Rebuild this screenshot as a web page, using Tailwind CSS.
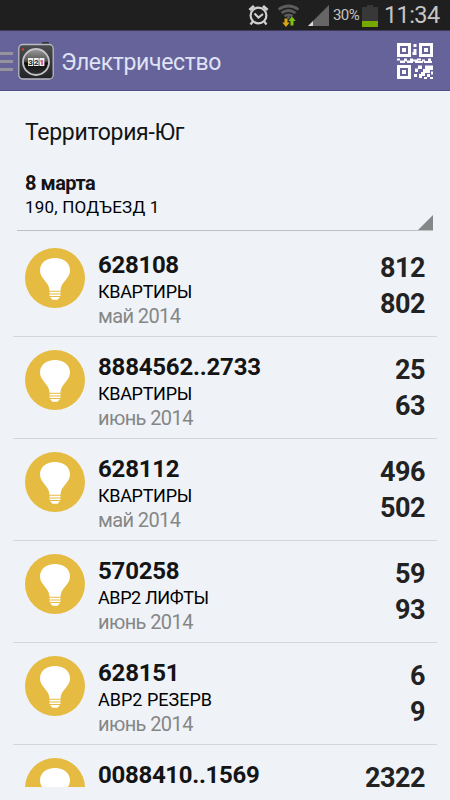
<!DOCTYPE html>
<html lang="ru">
<head>
    <meta charset="UTF-8">
    <meta name="viewport" content="width=device-width, initial-scale=1.0">
    <title>Электричество</title>
    <script src="https://cdn.jsdelivr.net/npm/@tailwindcss/browser@4"></script>
</head>
<body class="w-[450px] h-[800px] overflow-hidden bg-[#eff3f8] font-['Roboto',sans-serif] text-[#141414]">

    <!-- Иконки -->
    <svg class="hidden">
        <symbol id="bulb" viewBox="0 0 60 60">
            <circle cx="30" cy="30" r="30" fill="#e5bb42"/>
            <path fill="#fff" d="M30 10c-9 0-15 5-15 12.500 0 8.500 9.500 11.500 9.500 20.300h11c0-8.800 9.500-11.800 9.500-20.300C45 15 39 10 30 10z"/>
            <path fill="#fff" d="M24.500 43.800h11v1.600h-11zM24.500 46.400h11v1.600h-11zM25 49h10l-1.500 1.700h-7zM27 50.500h6v1.200h-6z"/>
        </symbol>
    </svg>

    <!-- Строка состояния -->
    <div class="h-[30px] bg-[#1f1f1f] flex items-center pl-[248px] text-[#c4c4c4]">
        <svg class="w-[21px] h-[22px]" viewBox="0 0 21 22" fill="none" stroke="#d0d0d0" stroke-width="2.200">
            <circle cx="10.500" cy="11.500" r="7.900"/>
            <path d="M6.500 9.500l4 4 4.500-3.500M4.800 17.500l-2.300 3M16.200 17.500l2.300 3"/>
            <path stroke-width="3" d="M1.500 6l4.500-4M19.500 6L15 2"/>
        </svg>
        <svg class="w-6 h-[23px] ml-[8px]" viewBox="0 0 24 23" fill="none">
            <g stroke="#5c5c5c" stroke-width="2.700">
                <path d="M1.500 5.500q10-7 20 0M4.500 9q7-5 14 0M7.500 12.200q4-2.800 8 0"/>
            </g>
            <circle cx="11.500" cy="13.500" r="1.500" fill="#5c5c5c"/>
            <path fill="#dca514" d="M7.500 14.500h3v4h2.200L9 23l-3.700-4.500h2.200z"/>
            <path fill="#7fbf10" d="M13.500 21.500h3V17h2.200L15 12.500 11.300 17h2.200z"/>
        </svg>
        <svg class="w-[22px] h-[22px] ml-[7px]" viewBox="0 0 22 22">
            <path fill="#666" d="M21 1v21H0z"/>
            <path fill="#d8d8d8" d="M5 17v5H0z"/>
        </svg>
        <span class="text-[15px] ml-[3px] w-[29px] tracking-[-0.6px]">30%</span>
        <svg class="w-4 h-[22px] mt-px" viewBox="0 0 16 22">
            <path fill="#383838" d="M5 0h6v2h5v20H0V2h5z"/>
            <path fill="#76a800" d="M0 16h16v6H0z"/>
        </svg>
        <span class="text-[23.500px] ml-[6px] mt-px leading-none tracking-[-0.6px]">11:34</span>
    </div>

    <!-- Шапка -->
    <header class="h-[61px] bg-[#66629a] border-t border-b border-t-[#3f3a5c] border-b-[#544d8c] flex items-center">
        <div class="w-[13px] mt-[2px] flex flex-col gap-[5px]">
            <div class="h-[3px] bg-[#95949c]"></div>
            <div class="h-[3px] bg-[#95949c]"></div>
            <div class="h-[3px] bg-[#95949c]"></div>
        </div>
        <svg class="w-9 h-[39px] ml-[5px]" viewBox="0 0 36 39">
            <defs>
                <linearGradient id="box" x1="0" y1="0" x2="0" y2="1">
                    <stop offset="0" stop-color="#4a4c50"/>
                    <stop offset="1" stop-color="#222428"/>
                </linearGradient>
                <linearGradient id="dial" x1="0" y1="0" x2="0" y2="1">
                    <stop offset="0" stop-color="#9a9a9a"/>
                    <stop offset=".45" stop-color="#555"/>
                    <stop offset=".55" stop-color="#0c0c0c"/>
                    <stop offset="1" stop-color="#333"/>
                </linearGradient>
            </defs>
            <rect x="24" y="1" width="7" height="4" rx="1" fill="#333"/>
            <rect x=".8" y="3.500" width="34.400" height="34.500" rx="4" fill="url(#box)" stroke="#b9bac0" stroke-width="1.300"/>
            <circle cx="5" cy="8.500" r="1.200" fill="#d8402c"/>
            <circle cx="18" cy="21" r="13" fill="url(#dial)" stroke="#c4c4c6" stroke-width="1.800"/>
            <rect x="10" y="17" width="5" height="8" fill="#eee"/>
            <rect x="15.700" y="17" width="5" height="8" fill="#eee"/>
            <rect x="21.400" y="17" width="5" height="8" fill="#eee"/>
            <text x="10.300" y="24" font-family="Roboto" font-size="8" font-weight="700" fill="#222">3</text>
            <text x="16" y="24" font-family="Roboto" font-size="8" font-weight="700" fill="#222">2</text>
            <text x="21.500" y="24" font-family="Roboto" font-size="8" font-weight="700" fill="#c22">1</text>
        </svg>
        <h1 class="ml-[7px] mt-[3px] text-[23px] leading-none text-[#dfe3f5] tracking-[-0.35px]">Электричество</h1>
        <svg class="w-9 h-9 ml-auto mr-[17px]" viewBox="0 0 36 36" fill="#fff">
            <path fill-rule="evenodd" d="M0 0h14v14H0zM3 3v8h8V3zM22 0h14v14H22zM25 3v8h8V3zM0 22h14v14H0zM3 25v8h8v-8z"/>
            <path d="M5 5h4v4H5zM27 5h4v4h-4zM5 27h4v4H5zM16.500 1h3v3h-3zM16.500 6h3v6h-3zM15.500 9h2v3h-2z"/>
            <path d="M0 15.500h3v2H0zM3 17.500h5v2.500H3zM7 15.500h3v3H7zM10 17.500h6v2.500h-6zM13 15.500h3v3h-3zM16 16.500h5v2h-5zM18 18h8v2h-8zM20 15.500h4v2h-4zM25 16.500h3v2h-3zM27 18h8v2h-8zM31 15.500h3v3h-3z"/>
            <path d="M21 22.500h4v3.500h-4v3h-3v-3.500h3zM28 22.500h8v4.500h-3v3h-5v3h-4v-4h2v-3h2zM17 31h3v3h-3zM22 31h3v4h-3zM30 31h3v3h-3zM34 28.500h2v3h-2zM33 34h3v2h-3zM27 34h3v2h-3z"/>
        </svg>
    </header>

    <!-- Список счётчиков -->
    <main>
        <section class="relative mx-[17px] h-[140px] pl-[8px] pt-[29px] border-b border-[#bcc1c6]">
            <h2 class="text-[23px] leading-[26px] tracking-[-0.3px]">Территория-Юг</h2>
            <p class="mt-[25px] text-[20px] leading-[24px] font-bold tracking-[-0.5px]">8 марта</p>
            <p class="text-[17px] leading-[24px] tracking-[0.2px] text-black">190, ПОДЪЕЗД 1</p>
            <svg class="absolute right-0 bottom-0 w-[15px] h-[15px]" viewBox="0 0 15 15"><path fill="#868789" d="M15 0v15H0z"/></svg>
        </section>

        <ul class="mx-[13px]">
            <li class="h-[106px] pt-[17px] pl-3 pr-[12px] flex border-b border-[#d3d7dc]">
                <svg class="w-[60px] h-[60px] shrink-0"><use href="#bulb"/></svg>
                <div class="ml-[13px] flex-1">
                    <p class="mt-[3px] text-[24px] leading-[29px] font-bold tracking-[-0.3px]">628108</p>
                    <p class="text-[18px] leading-[24px] text-black tracking-[-0.3px]">КВАРТИРЫ</p>
                    <p class="text-[20px] leading-[25px] text-[#868686] tracking-[-0.6px]">май 2014</p>
                </div>
                <div class="text-right text-[27px] leading-[36px] font-bold text-[#222] tracking-[-0.5px]">
                    <p class="mt-[2px]">812</p>
                    <p>802</p>
                </div>
            </li>
            <li class="h-[102px] pt-[13px] pl-3 pr-[12px] flex border-b border-[#d3d7dc]">
                <svg class="w-[60px] h-[60px] shrink-0"><use href="#bulb"/></svg>
                <div class="ml-[13px] flex-1">
                    <p class="mt-[3px] text-[24px] leading-[29px] font-bold tracking-[-0.2px]">8884562..2733</p>
                    <p class="text-[18px] leading-[24px] text-black tracking-[-0.3px]">КВАРТИРЫ</p>
                    <p class="text-[20px] leading-[25px] text-[#868686] tracking-[-0.6px]">июнь 2014</p>
                </div>
                <div class="text-right text-[27px] leading-[36px] font-bold text-[#222] tracking-[-0.5px]">
                    <p class="mt-[2px]">25</p>
                    <p>63</p>
                </div>
            </li>
            <li class="h-[102px] pt-[13px] pl-3 pr-[12px] flex border-b border-[#d3d7dc]">
                <svg class="w-[60px] h-[60px] shrink-0"><use href="#bulb"/></svg>
                <div class="ml-[13px] flex-1">
                    <p class="mt-[3px] text-[24px] leading-[29px] font-bold tracking-[-0.2px]">628112</p>
                    <p class="text-[18px] leading-[24px] text-black tracking-[-0.3px]">КВАРТИРЫ</p>
                    <p class="text-[20px] leading-[25px] text-[#868686] tracking-[-0.6px]">май 2014</p>
                </div>
                <div class="text-right text-[27px] leading-[36px] font-bold text-[#222] tracking-[-0.5px]">
                    <p class="mt-[2px]">496</p>
                    <p>502</p>
                </div>
            </li>
            <li class="h-[102px] pt-[13px] pl-3 pr-[12px] flex border-b border-[#d3d7dc]">
                <svg class="w-[60px] h-[60px] shrink-0"><use href="#bulb"/></svg>
                <div class="ml-[13px] flex-1">
                    <p class="mt-[3px] text-[24px] leading-[29px] font-bold tracking-[-0.2px]">570258</p>
                    <p class="text-[18px] leading-[24px] text-black tracking-[-0.4px]">АВР2 ЛИФТЫ</p>
                    <p class="text-[20px] leading-[25px] text-[#868686] tracking-[-0.6px]">июнь 2014</p>
                </div>
                <div class="text-right text-[27px] leading-[36px] font-bold text-[#222] tracking-[-0.5px]">
                    <p class="mt-[2px]">59</p>
                    <p>93</p>
                </div>
            </li>
            <li class="h-[102px] pt-[13px] pl-3 pr-[12px] flex border-b border-[#d3d7dc]">
                <svg class="w-[60px] h-[60px] shrink-0"><use href="#bulb"/></svg>
                <div class="ml-[13px] flex-1">
                    <p class="mt-[3px] text-[24px] leading-[29px] font-bold tracking-[-0.2px]">628151</p>
                    <p class="text-[18px] leading-[24px] text-black">АВР2 РЕЗЕРВ</p>
                    <p class="text-[20px] leading-[25px] text-[#868686] tracking-[-0.6px]">июнь 2014</p>
                </div>
                <div class="text-right text-[27px] leading-[36px] font-bold text-[#222] tracking-[-0.5px]">
                    <p class="mt-[2px]">6</p>
                    <p>9</p>
                </div>
            </li>
            <!-- Последняя строка видна наполовину -->
            <li class="h-[55px] pt-[13px] pl-3 pr-[12px] flex">
                <div class="w-[60px] h-[29px] overflow-hidden shrink-0">
                    <svg class="w-[60px] h-[60px]"><use href="#bulb"/></svg>
                </div>
                <div class="ml-[13px] flex-1">
                    <p class="mt-[3px] text-[24px] leading-[29px] font-bold tracking-[-0.3px]">0088410..1569</p>
                </div>
                <div class="text-right text-[27px] leading-[36px] font-bold text-[#222] tracking-[-0.5px]">
                    <p class="mt-[2px]">2322</p>
                </div>
            </li>
        </ul>
    </main>
</body>
</html>
